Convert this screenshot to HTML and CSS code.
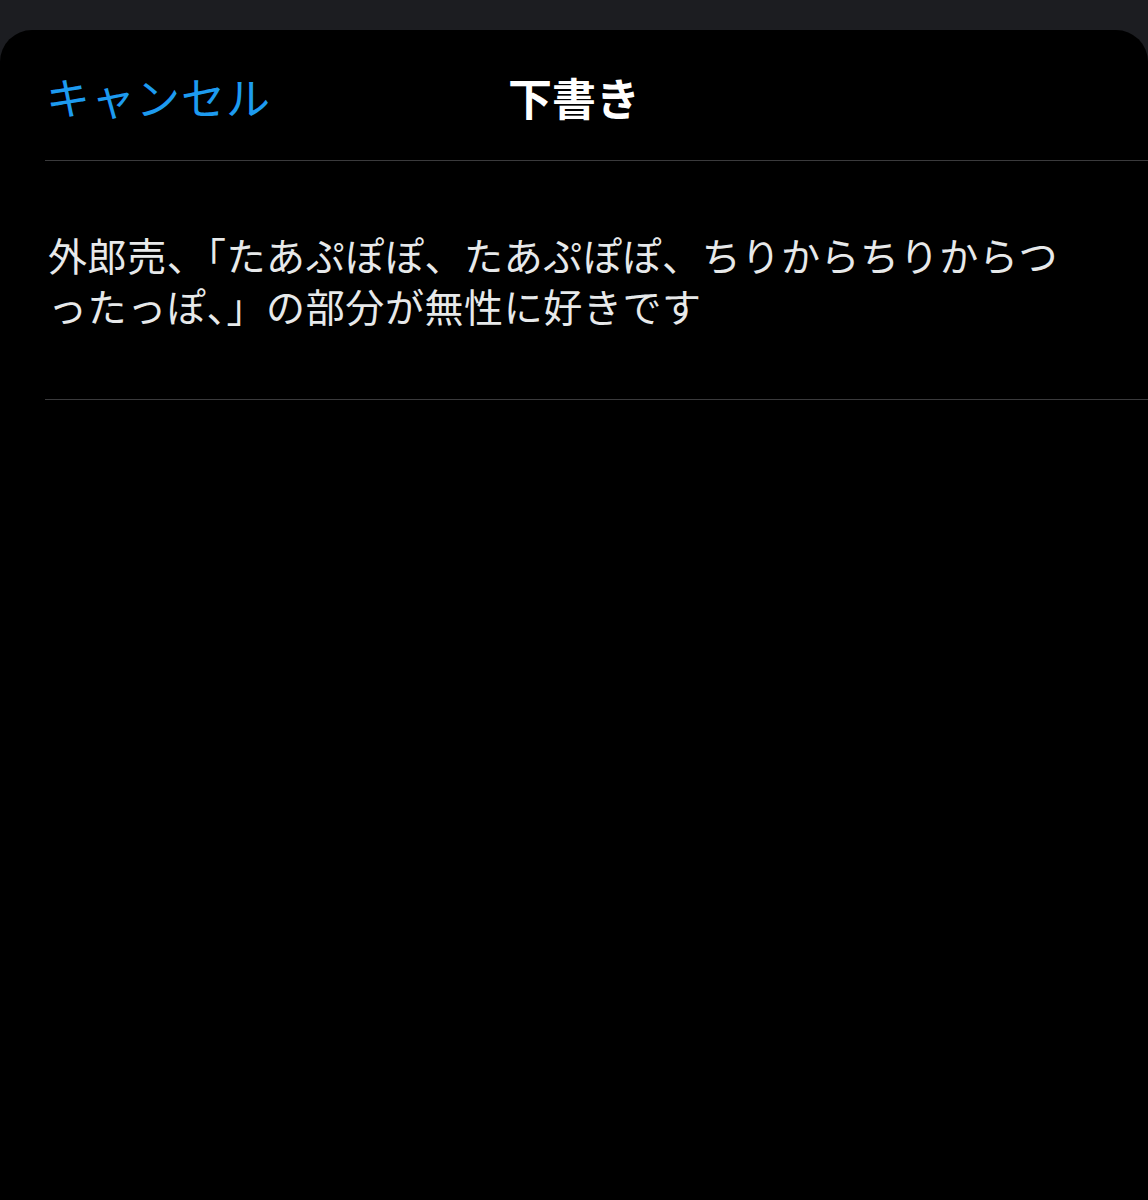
FILE: index.html
```html
<!DOCTYPE html>
<html lang="ja">
<head>
    <meta charset="UTF-8">
    <meta name="viewport" content="width=device-width, initial-scale=1.0">
    <title>下書き</title>
    <link rel="stylesheet" href="styles.css">
</head>
<body>

    <div class="sheet">
        <div class="header">
            <button class="cancel">キャンセル</button>
            <div class="title">下書き</div>
        </div>
        <div class="draft">
            <p class="draft-text">外郎売、「たあぷぽぽ、たあぷぽぽ、ちりからちりからつ<br>ったっぽ、」の部分が無性に好きです</p>
        </div>
    </div>

</body>
</html>
```

FILE: styles.css
```css
body {
    margin: 0;
    background-color: #1c1d21;
    font-family: 'Noto Sans CJK JP', 'Noto Sans', sans-serif;
    height: 100vh;
    overflow: hidden;
}

.sheet {
    margin-top: 30px;
    height: 1170px;
    background-color: #000;
    border-radius: 32px 32px 0 0;
}

.header {
    position: relative;
    height: 130px;
    display: flex;
    align-items: center;
    justify-content: center;
    margin-left: 45px;
    border-bottom: 1px solid #3a3a3c;
}

.cancel {
    position: absolute;
    left: 1px;
    top: 36px;
    background: none;
    border: none;
    padding: 0;
    font-family: inherit;
    font-size: 44px;
    letter-spacing: 1px;
    color: #1d9bf0;
    cursor: pointer;
    line-height: 60px;
}

.title {
    margin-right: 45px;
    margin-top: 4px;
    font-size: 44px;
    font-weight: bold;
    color: #fff;
}

.draft {
    margin-left: 45px;
    height: 238px;
    border-bottom: 1px solid #3a3a3c;
}

.draft-text {
    margin: 0;
    padding: 68px 0 0 3px;
    font-size: 39px;
    line-height: 51px;
    letter-spacing: 0.6px;
    color: #e7e9ea;
}
```
